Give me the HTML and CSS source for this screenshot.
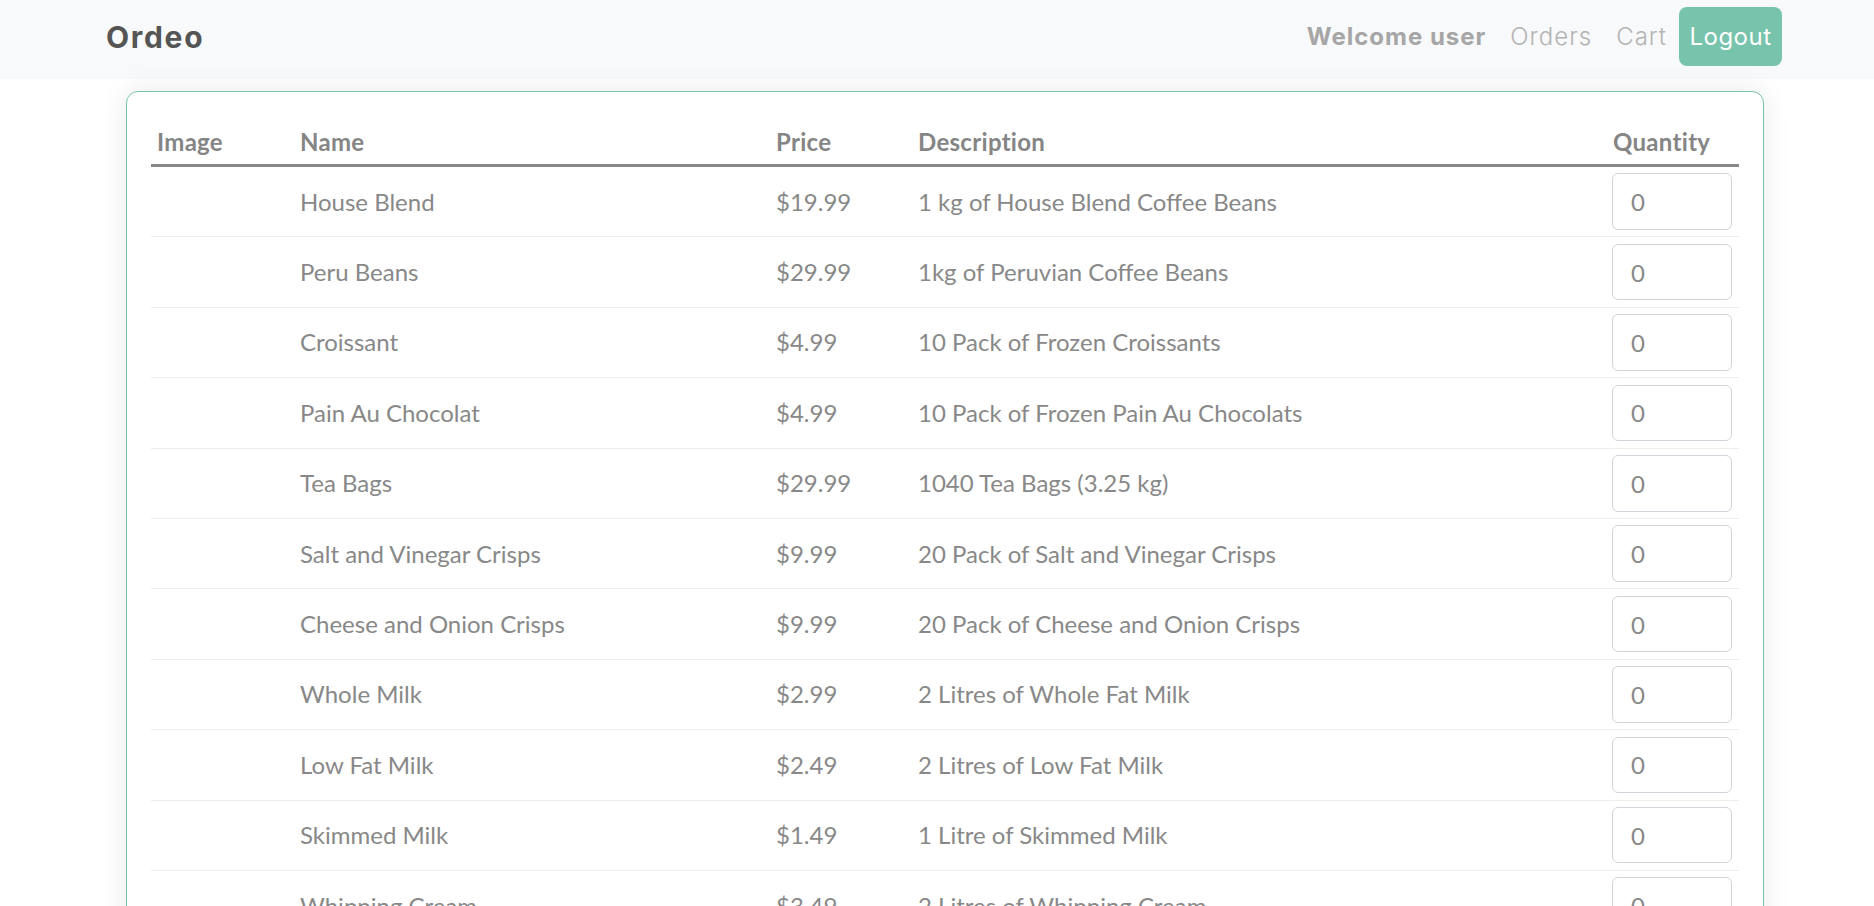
FILE: index.html
```html
<!DOCTYPE html>
<html lang="en">
<head>
<meta charset="utf-8">
<title>Ordeo</title>
<link rel="stylesheet" href="styles.css">
</head>
<body>
<nav class="navbar">
  <a class="brand" href="#">Ordeo</a>
  <div class="nav-right">
    <span class="nav-welcome">Welcome user</span>
    <a class="nav-link" href="#">Orders</a>
    <a class="nav-link" href="#">Cart</a>
    <button class="btn-logout" type="button">Logout</button>
  </div>
</nav>
<main class="card">
  <div class="grid">
    <div class="row head">
      <div class="cell">Image</div>
      <div class="cell">Name</div>
      <div class="cell">Price</div>
      <div class="cell">Description</div>
      <div class="cell">Quantity</div>
    </div>
    <div class="row"><div class="cell"></div><div class="cell">House Blend</div><div class="cell">$19.99</div><div class="cell">1 kg of House Blend Coffee Beans</div><div class="cell"><input class="qty" type="text" value="0"></div></div>
    <div class="row"><div class="cell"></div><div class="cell">Peru Beans</div><div class="cell">$29.99</div><div class="cell">1kg of Peruvian Coffee Beans</div><div class="cell"><input class="qty" type="text" value="0"></div></div>
    <div class="row"><div class="cell"></div><div class="cell">Croissant</div><div class="cell">$4.99</div><div class="cell">10 Pack of Frozen Croissants</div><div class="cell"><input class="qty" type="text" value="0"></div></div>
    <div class="row"><div class="cell"></div><div class="cell">Pain Au Chocolat</div><div class="cell">$4.99</div><div class="cell">10 Pack of Frozen Pain Au Chocolats</div><div class="cell"><input class="qty" type="text" value="0"></div></div>
    <div class="row"><div class="cell"></div><div class="cell">Tea Bags</div><div class="cell">$29.99</div><div class="cell">1040 Tea Bags (3.25 kg)</div><div class="cell"><input class="qty" type="text" value="0"></div></div>
    <div class="row"><div class="cell"></div><div class="cell">Salt and Vinegar Crisps</div><div class="cell">$9.99</div><div class="cell">20 Pack of Salt and Vinegar Crisps</div><div class="cell"><input class="qty" type="text" value="0"></div></div>
    <div class="row"><div class="cell"></div><div class="cell">Cheese and Onion Crisps</div><div class="cell">$9.99</div><div class="cell">20 Pack of Cheese and Onion Crisps</div><div class="cell"><input class="qty" type="text" value="0"></div></div>
    <div class="row"><div class="cell"></div><div class="cell">Whole Milk</div><div class="cell">$2.99</div><div class="cell">2 Litres of Whole Fat Milk</div><div class="cell"><input class="qty" type="text" value="0"></div></div>
    <div class="row"><div class="cell"></div><div class="cell">Low Fat Milk</div><div class="cell">$2.49</div><div class="cell">2 Litres of Low Fat Milk</div><div class="cell"><input class="qty" type="text" value="0"></div></div>
    <div class="row"><div class="cell"></div><div class="cell">Skimmed Milk</div><div class="cell">$1.49</div><div class="cell">1 Litre of Skimmed Milk</div><div class="cell"><input class="qty" type="text" value="0"></div></div>
    <div class="row"><div class="cell"></div><div class="cell">Whipping Cream</div><div class="cell">$3.49</div><div class="cell">2 Litres of Whipping Cream</div><div class="cell"><input class="qty" type="text" value="0"></div></div>
  </div>
</main>
</body>
</html>
```
FILE: styles.css
```css
* { box-sizing: border-box; }
html, body { margin: 0; padding: 0; background: #fff; }
body { font-family: "Lato", "Open Sans", sans-serif; color: #888; }

.navbar {
  height: 79px;
  background: #f8f9fa;
  display: flex;
  align-items: center;
  justify-content: space-between;
  padding: 0 92px 5px 106px;
}
.brand {
  font-family: "Inter", "DejaVu Sans", sans-serif;
  font-weight: 700;
  font-size: 30px;
  color: #555;
  text-decoration: none;
  letter-spacing: 1.7px;
}
.nav-right { display: flex; align-items: center; }
.nav-welcome, .nav-link {
  font-family: "Inter", "DejaVu Sans", sans-serif;
  font-size: 24px;
  padding: 0 12px;
  text-decoration: none;
  line-height: 36px;
  letter-spacing: 1px;
}
.nav-welcome { font-weight: 700; color: #a6a6a6; }
.nav-link { font-weight: 300; color: #b3b3b3; }
.btn-logout {
  font-family: "Inter", "DejaVu Sans", sans-serif;
  font-size: 24px;
  font-weight: 400;
  letter-spacing: 0.5px;
  color: #fff;
  background: #77c3ab;
  border: 0;
  border-radius: 8px;
  width: 103px;
  height: 59px;
  margin-top: -1px;
  padding: 0;
}

.card {
  margin: 12px 0 0 126px;
  width: 1638px;
  border: 1px solid #77c3ab;
  border-radius: 12px;
  padding: 25px 24px 24px 24px;
  background: #fff;
  box-shadow: 0 0 28px rgba(0, 0, 0, 0.09);
}
.grid { display: flex; flex-direction: column; }
.row {
  display: grid;
  grid-template-columns: 143px 476px 142px 1fr 132px;
  align-items: center;
  height: 70.4px;
  border-bottom: 1px solid #ececec;
  font-size: 24px;
  line-height: 36px;
}
.row .cell { padding: 0 6px; }
.row.head {
  height: 50px;
  align-items: start;
  border-bottom: 3px solid #888;
  font-weight: 700;
  color: #858585;
  letter-spacing: 0.3px;
}
.row.head .cell { padding: 7px 6px 0 6px; }
.qty {
  display: block;
  width: 120px;
  height: 56.5px;
  margin-left: -1px;
  border: 1px solid #ced4da;
  border-radius: 6px;
  padding: 0 18px;
  font-family: "Lato", sans-serif;
  font-size: 24px;
  color: #888;
  background: #fff;
}
```
